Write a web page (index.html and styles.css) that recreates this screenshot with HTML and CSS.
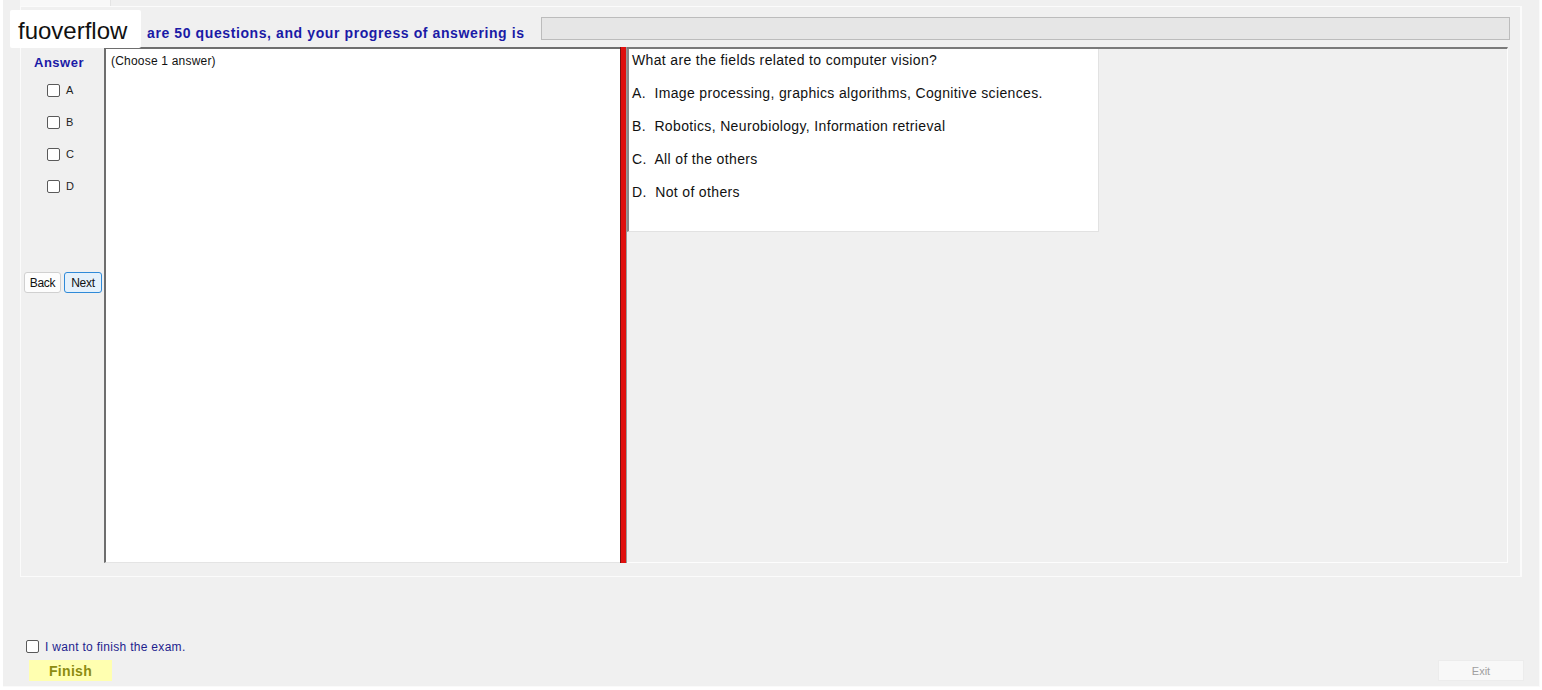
FILE: index.html
```html
<!DOCTYPE html>
<html lang="en">
<head>
    <meta charset="UTF-8">
    <title>Exam</title>
    <link rel="stylesheet" href="styles.css">
</head>
<body>
    <div id="window">
        <div class="tab"></div>
        <div id="panel">
            <div class="header">
                <p class="title">are 50 questions, and your progress of answering is</p>
                <div class="progress"></div>
            </div>
            <div class="main">
                <div class="side">
                    <div class="side-title">Answer</div>
                    <label class="opt"><span class="box"></span>A</label>
                    <label class="opt"><span class="box"></span>B</label>
                    <label class="opt"><span class="box"></span>C</label>
                    <label class="opt"><span class="box"></span>D</label>
                    <div class="nav">
                        <button class="btn">Back</button>
                        <button class="btn btn-next">Next</button>
                    </div>
                </div>
                <div class="answer">(Choose 1 answer)</div>
                <div class="split"></div>
                <div class="question-wrap">
                    <div class="question">
                        <p>What are the fields related to computer vision?</p>
                        <p>A.&nbsp; Image processing, graphics algorithms, Cognitive sciences.</p>
                        <p>B.&nbsp; Robotics, Neurobiology, Information retrieval</p>
                        <p>C.&nbsp; All of the others</p>
                        <p>D.&nbsp; Not of others</p>
                    </div>
                </div>
            </div>
        </div>
        <div class="footer">
            <div class="finish-col">
                <label class="agree"><span class="box"></span>I want to finish the exam.</label>
                <button class="finish">Finish</button>
            </div>
            <button class="exit">Exit</button>
        </div>
        <div class="mark">fuoverflow</div>
    </div>
</body>
</html>
```

FILE: styles.css
```css
*{
    box-sizing: border-box;
}
body{
    margin: 0;
    background-color: #ffffff;
    font-family: "Liberation Sans", Arial, sans-serif;
}
#window{
    position: relative;
    width: 1537px;
    height: 687px;
    margin-left: 3px;
    background-color: #f0f0f0;
    border-right: 1px solid #fafafa;
    border-bottom: 1px solid #fafafa;
}
.tab{
    width: 91px;
    height: 6px;
    margin-left: 17px;
    background-color: #f8f8f8;
    border-right: 1px solid #e4e4e4;
}
#panel{
    width: 1502px;
    height: 571px;
    margin-left: 17px;
    border: 1px solid #fbfbfb;
    border-right: 2px solid #fbfbfb;
}
.header{
    display: flex;
    height: 40px;
    padding-top: 10px;
    padding-left: 126px;
}
.title{
    margin: 0;
    padding-top: 7px;
    width: 394px;
    font-size: 14px;
    font-weight: bold;
    letter-spacing: 0.6px;
    color: #1a1aa6;
    line-height: 18px;
    white-space: nowrap;
}
.progress{
    width: 969px;
    height: 23px;
    background-color: #e6e6e6;
    border: 1px solid #bcbcbc;
}
.main{
    display: flex;
    height: 516px;
    margin-right: 12px;
}
.side{
    width: 83px;
    padding-top: 8px;
}
.side-title{
    font-size: 13px;
    font-weight: bold;
    letter-spacing: 0.5px;
    color: #1a1aa6;
    padding-left: 13px;
    height: 22px;
}
.opt{
    display: flex;
    align-items: center;
    height: 32px;
    padding-left: 26px;
    padding-bottom: 6px;
    font-size: 11px;
    color: #222;
}
.box{
    display: inline-block;
    width: 13px;
    height: 13px;
    border: 1px solid #5a5a5a;
    border-radius: 2px;
    background-color: #fff;
    margin-right: 6px;
}
.nav{
    display: flex;
    gap: 3px;
    margin-top: 67px;
    padding-left: 3px;
}
.btn{
    height: 21px;
    padding: 0;
    width: 37px;
    font-family: inherit;
    font-size: 12px;
    letter-spacing: -0.3px;
    color: #111;
    background-color: #fdfdfd;
    border: 1px solid #d0d0d0;
    border-radius: 3px;
}
.btn-next{
    width: 38px;
    background-color: #e5f1fb;
    border-color: #2f8ad8;
}
.answer{
    width: 516px;
    background-color: #fff;
    border-top: 2px solid #6e6e6e;
    border-left: 2px solid #6e6e6e;
    border-bottom: 1px solid #e4e4e4;
    padding: 5px 5px;
    font-size: 12px;
    letter-spacing: 0.2px;
    color: #111;
}
.split{
    width: 7px;
    background-color: #e0100e;
    border-left: 1px solid #7a1010;
    border-right: 1px solid #9a9a9a;
}
.question-wrap{
    flex: 1;
    border-top: 2px solid #7a7a7a;
    border-right: 1px solid #fdfdfd;
    border-bottom: 1px solid #fdfdfd;
}
.question{
    width: 472px;
    height: 183px;
    background-color: #fff;
    border-left: 2px solid #8a8a8a;
    border-right: 1px solid #e2e2e2;
    border-bottom: 1px solid #e2e2e2;
    padding: 3px 0 0 3px;
}
.question p{
    margin: 0;
    height: 33px;
    font-size: 14px;
    letter-spacing: 0.35px;
    line-height: 17px;
    color: #111;
}
.footer{
    display: flex;
    justify-content: space-between;
    align-items: flex-end;
    padding: 61px 15px 0 23px;
}
.agree{
    display: flex;
    align-items: center;
    height: 17px;
    font-size: 12px;
    letter-spacing: 0.3px;
    color: #1e1e8e;
}
.agree .box{
    margin-right: 6px;
}
.finish{
    margin: 5px 0 0 3px;
    width: 83px;
    height: 21px;
    padding: 0;
    border: none;
    background-color: #ffffb0;
    font-family: inherit;
    font-size: 14px;
    font-weight: bold;
    letter-spacing: 0.3px;
    color: #8c8c10;
}
.exit{
    width: 86px;
    height: 21px;
    padding: 0;
    border: 1px solid #ececec;
    background-color: #f8f8f8;
    font-family: inherit;
    font-size: 11px;
    color: #a0a0a0;
}
.mark{
    position: absolute;
    left: 7px;
    top: 10px;
    width: 131px;
    height: 38px;
    padding: 7px 0 0 8px;
    background-color: #fff;
    font-size: 24px;
    color: #111;
    border-radius: 2px;
}
```
